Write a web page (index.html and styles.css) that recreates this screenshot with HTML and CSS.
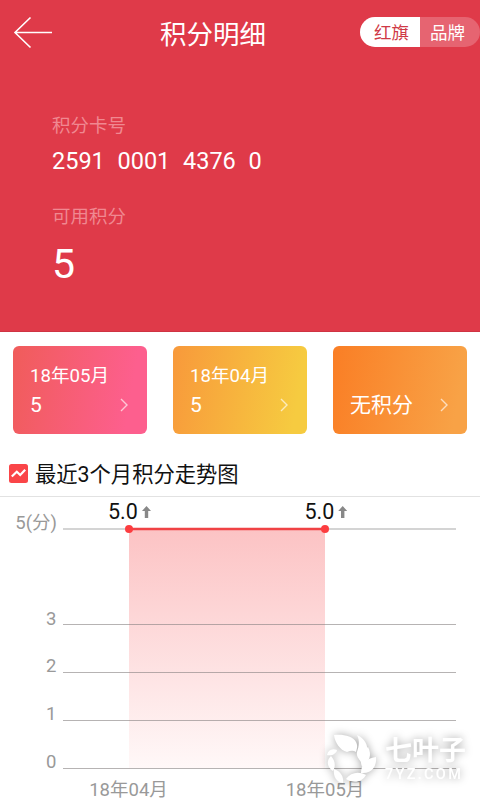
FILE: index.html
```html
<!DOCTYPE html>
<html lang="zh-CN">
<head>
<meta charset="utf-8">
<title>积分明细</title>
<link rel="stylesheet" href="styles.css">
</head>
<body>
<main class="screen">
  <section class="hero">
    <header class="bar">
      <svg class="back" width="40" height="34" viewBox="0 0 40 34"><path d="M17.500 1.500 2 16.500l15.500 15M2 16.500h37" /></svg>
      <h1 class="title">积分明细</h1>
      <div class="switch"><span class="tab active">红旗</span><span class="tab">品牌</span></div>
    </header>
    <div class="account">
      <div class="label">积分卡号</div>
      <div class="number">2591  0001  4376  0</div>
      <div class="label">可用积分</div>
      <div class="points">5</div>
    </div>
  </section>

  <section class="cards">
    <div class="card pink">
      <div class="month">18年05月</div>
      <div class="row"><span class="value">5</span><svg class="chevron" width="8" height="14" viewBox="0 0 8 14"><path d="m1 1 6 6-6 6"/></svg></div>
    </div>
    <div class="card yellow">
      <div class="month">18年04月</div>
      <div class="row"><span class="value">5</span><svg class="chevron" width="8" height="14" viewBox="0 0 8 14"><path d="m1 1 6 6-6 6"/></svg></div>
    </div>
    <div class="card orange">
      <div class="month"></div>
      <div class="row"><span class="value">无积分</span><svg class="chevron" width="8" height="14" viewBox="0 0 8 14"><path d="m1 1 6 6-6 6"/></svg></div>
    </div>
  </section>

  <div class="heading">
    <svg width="19" height="19" viewBox="0 0 19 19"><rect width="19" height="19" rx="2.500" fill="#fa4548"/><path d="m2.800 12.500 5-4.700 3.400 3.200 5-5.300" fill="none" stroke="#fff" stroke-width="2.200"/></svg>
    <h2>最近3个月积分走势图</h2>
  </div>

  <svg class="chart" width="480" height="303" viewBox="0 497 480 303">
    <defs>
      <linearGradient id="area" x1="0" y1="0" x2="0" y2="1"><stop offset="0" stop-color="#fcc3c4"/><stop offset="1" stop-color="#fff8f8"/></linearGradient>
    </defs>
    <rect x="129" y="529" width="196" height="239" fill="url(#area)"/>
    <path class="grid top" d="M63 529H456"/>
    <path class="grid" d="M63 624.500H456M63 672.500H456M63 720.500H456M63 768.500H456"/>
    <path d="M129 529H325" stroke="#f04245" stroke-width="2.500"/>
    <circle cx="129" cy="529" r="4" fill="#fc3d40"/>
    <circle cx="325" cy="529" r="4" fill="#fc3d40"/>
    <g class="axis" text-anchor="end">
      <text x="57" y="529">5(分)</text>
      <text x="56.500" y="625">3</text>
      <text x="56.500" y="672">2</text>
      <text x="56.500" y="720">1</text>
      <text x="56.500" y="768">0</text>
    </g>
    <g class="axis" text-anchor="middle">
      <text x="128.500" y="796">18年04月</text>
      <text x="325" y="796">18年05月</text>
    </g>
    <g class="peak"><text x="108" y="519">5.0</text><text x="304.500" y="519">5.0</text></g>
    <path class="up" d="m146.500 506 4.500 5h-2.800v7h-3.400v-7H142zM342.700 506l4.500 5h-2.800v7H341v-7h-2.800z"/>
  </svg>

  <div class="watermark">
    <svg width="54" height="52" viewBox="0 0 54 52" fill="#fff">
      <path d="M8 2c9-1 19 1 22 7 2 4 1 6 0 10-3-2-6-1-9 0C14 17 9 10 8 2z"/>
      <path d="M31 2c7 3 12 10 10 19l-6 8c-2-3-5-6-4-10 2-6 3-11 0-17z"/>
      <path d="M50 24c1 9-4 17-15 16 0-8 5-15 15-16z"/>
      <path d="M42 14c4 7 2 15-6 20-3-8 0-15 6-20z"/>
      <path d="M20 46c5-7 13-8 20-4-4 7-12 9-20 4z"/>
      <path d="M8 36c6 2 10 7 9 14C10 49 7 43 8 36z"/>
      <path d="M5 23c4 5 5 9 2 15-6-4-7-10-2-15z"/>
      <path d="M1 22c1-5 5-7 10-5-1 4-5 6-10 5z"/>
    </svg>
    <div class="mark"><div class="mark-name">七叶子</div><div class="mark-url">7YZ.COM</div></div>
  </div>
</main>
</body>
</html>
```
FILE: styles.css
```css
* { box-sizing: border-box; }
body {
  margin: 0;
  background: #fff;
  font-family: Roboto, "Noto Sans CJK SC", sans-serif;
}
.screen {
  position: relative;
  width: 480px;
  height: 800px;
  overflow: hidden;
}
.hero {
  height: 332px;
  background: #df3a49;
  border-bottom: 1px solid #cf3343;
  color: #fff;
}
.bar {
  display: grid;
  grid-template-columns: 120px 1fr 120px;
  align-items: center;
  height: 66px;
}
.back {
  margin-left: 13px;
  fill: none;
  stroke: #fff;
  stroke-width: 1.6;
}
.title {
  margin: 4px 0 0 -54px;
  font-size: 26.500px;
  font-weight: 400;
  line-height: 36px;
  text-align: center;
}
.switch {
  display: flex;
  height: 30px;
  margin-top: -2px;
  border-radius: 15px;
  overflow: hidden;
  background: #e66471;
}
.tab {
  width: 60px;
  padding-left: 10px;
  font-size: 17.500px;
  line-height: 32px;
}
.tab.active {
  padding-left: 14px;
  background: #fff;
  color: #cf3946;
}
.account { padding: 47px 52px 0; }
.label {
  height: 26px;
  color: #f08891;
  font-size: 18.500px;
  line-height: 26px;
}
.number {
  height: 32px;
  margin: 6px 0 27px;
  font-size: 23.500px;
  line-height: 32px;
  white-space: pre;
  word-spacing: .5px;
}
.points {
  margin-top: 8px;
  font-size: 41px;
  line-height: 52px;
}
.cards {
  display: grid;
  grid-template-columns: repeat(3, 134px);
  gap: 26px;
  padding: 14px 13px 0;
}
.card {
  height: 88px;
  padding: 15px 19px 0 17px;
  border-radius: 6px;
  color: #fff;
}
.pink { background: linear-gradient(100deg, #f05c5a, #fd5f8e 85%); }
.yellow { background: linear-gradient(100deg, #f8993b, #f6cb40 90%); }
.orange { background: linear-gradient(100deg, #fa7e25, #f8a246 90%); }
.month {
  height: 29px;
  font-size: 18.600px;
  line-height: 30px;
}
.row {
  display: flex;
  align-items: center;
  justify-content: space-between;
  height: 30px;
}
.value {
  font-size: 21px;
  line-height: 31px;
}
.chevron {
  fill: none;
  stroke: #fff;
  stroke-width: 1.4;
  opacity: .65;
}
.heading {
  display: flex;
  align-items: center;
  gap: 7px;
  height: 63px;
  padding: 16px 9px 0;
  border-bottom: 1px solid #e2e2e2;
}
.heading h2 {
  margin: 4px 0 0;
  color: #111;
  font-size: 21.300px;
  font-weight: 400;
  line-height: 30px;
}
.chart { display: block; }
.grid {
  fill: none;
  stroke: #858080;
  stroke-opacity: .6;
}
.grid.top {
  stroke: #d4d4d4;
  stroke-opacity: 1;
  stroke-width: 2;
}
.axis {
  fill: #999;
  font-size: 18.500px;
}
.peak {
  fill: #111;
  font-size: 21.500px;
}
.up { fill: #888; }
.watermark {
  position: absolute;
  left: 326px;
  top: 733px;
  display: flex;
  gap: 5px;
  color: #fff;
  filter: drop-shadow(0 0 4px rgba(0, 0, 0, .35));
}
.mark-name {
  height: 33px;
  font-size: 27px;
  font-weight: 700;
  line-height: 37px;
}
.mark-url {
  height: 18px;
  font-size: 14.500px;
  font-weight: 500;
  letter-spacing: 2.300px;
  line-height: 17px;
}
```
